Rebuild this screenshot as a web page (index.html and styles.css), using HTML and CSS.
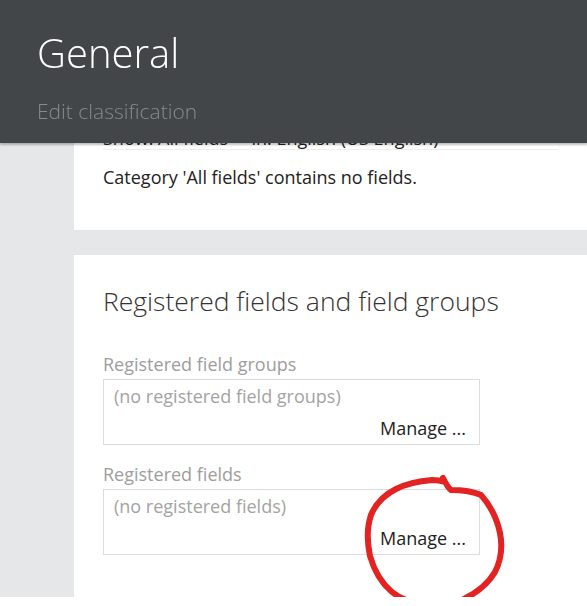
FILE: index.html
```html
<!DOCTYPE html>
<html lang="en">
<head>
<meta charset="utf-8">
<title>General – Edit classification</title>
<link rel="stylesheet" href="styles.css">
</head>
<body>
<header class="topbar">
  <h1 class="topbar-title">General</h1>
  <div class="topbar-sub">Edit classification</div>
</header>

<div class="page">
  <section class="panel panel-category">
    <div class="filter-row">Show: All fields &nbsp;&nbsp;&nbsp; in: English (US English)</div>
    <p class="empty-note">Category 'All fields' contains no fields.</p>
  </section>

  <section class="panel panel-registered">
    <h2 class="panel-heading">Registered fields and field groups</h2>

    <div class="field">
      <div class="field-label">Registered field groups</div>
      <div class="field-box">
        <div class="field-empty">(no registered field groups)</div>
        <div class="field-action"><a class="manage-link" href="#">Manage ...</a></div>
      </div>
    </div>

    <div class="field">
      <div class="field-label">Registered fields</div>
      <div class="field-box">
        <div class="field-empty">(no registered fields)</div>
        <div class="field-action"><a class="manage-link" href="#">Manage ...</a></div>
      </div>
    </div>

    <!-- hand-drawn highlight around the second Manage link -->
    <svg class="scribble" width="160" height="150" viewBox="0 0 160 150" aria-hidden="true">
      <path d="M87 8 C90 14 92 18 95 20 C104 20 116 21 125 25 C134 35 141 49 144 63 C147 78 145 90 139 102 C132 114 122 122 108 129 C96 134 86 136 74 135 C60 134 46 130 36 122 C24 112 18 100 14 86 C11 72 11 57 15 45 C20 33 28 25 40 19 C52 13 64 11 76 10 C82 10 86 11 89 12"
            fill="none" stroke="#e32222" stroke-width="6" stroke-linecap="round" stroke-linejoin="round"/>
    </svg>
  </section>
</div>
</body>
</html>
```

FILE: styles.css
```css
* {
  box-sizing: border-box;
}

body {
  margin: 0;
  background: #ffffff;
  font-family: "Open Sans", "Noto Sans", sans-serif;
  color: #222;
}

/* fixed title bar that sits over the scrolled page */
.topbar {
  position: fixed;
  top: 0;
  left: 0;
  right: 0;
  height: 143px;
  background: #424649;
  padding: 28px 0 0 37px;
  box-shadow: 0 2px 2px rgba(0, 0, 0, 0.25);
  z-index: 10;
}

.topbar-title {
  margin: 0;
  font-size: 40px;
  font-weight: 300;
  line-height: 50px;
  color: #ffffff;
}

.topbar-sub {
  margin-top: 19px;
  font-size: 21px;
  font-weight: 300;
  line-height: 28px;
  color: #878a8d;
}

.page {
  background: #e6e7e9;
  padding-left: 74px;
  display: flex;
  flex-direction: column;
  gap: 25px;
}

.panel {
  background: #ffffff;
  padding: 0 29px;
  position: relative;
}

.panel-category {
  padding-top: 128px;
  padding-bottom: 42px;
}

.filter-row {
  font-size: 18px;
  line-height: 21px;
  color: #222;
  border-bottom: 1px solid #eeeeee;
  white-space: nowrap;
}

.empty-note {
  margin: 16px 0 0;
  font-size: 18px;
  line-height: 22px;
  color: #222;
}

.panel-registered {
  padding-top: 30px;
  padding-bottom: 42px;
}

.panel-heading {
  margin: 0 0 36px;
  font-size: 26.5px;
  font-weight: 300;
  line-height: 32px;
  color: #333;
}

.field + .field {
  margin-top: 18px;
}

.field-label {
  font-size: 18px;
  line-height: 22px;
  color: #9d9d9d;
  margin-bottom: 4px;
}

.field-box {
  width: 377px;
  border: 1px solid #dcdcdc;
  padding: 5px 13px 5px 10px;
  display: flex;
  flex-direction: column;
  gap: 10px;
}

.field-empty {
  font-size: 18px;
  line-height: 22px;
  color: #a3a3a3;
}

.field-action {
  text-align: right;
  font-size: 18px;
  line-height: 22px;
}

.manage-link {
  color: #222;
  text-decoration: none;
}

.scribble {
  position: absolute;
  left: 282px;
  top: 215px;
  pointer-events: none;
}
```
